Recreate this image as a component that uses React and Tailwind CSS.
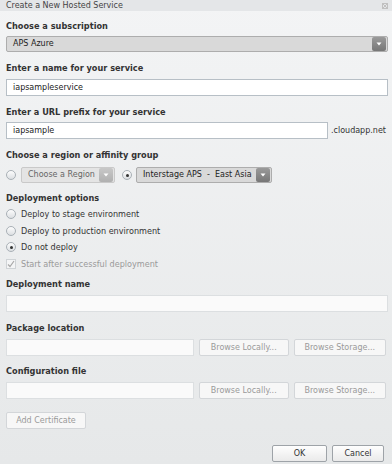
import React from 'react';

const font = { fontFamily: '"DejaVu Sans", Verdana, sans-serif' };

function Label({ children, className = '' }) {
  return <div className={`text-[8.2px] leading-[12px] font-bold text-[#333] ${className}`}>{children}</div>;
}

function Arrow({ dark }) {
  return (
    <div className={`w-[14px] h-[14px] rounded-[2px] flex items-center justify-center ${dark ? 'bg-gradient-to-b from-[#9a9a9a] to-[#777]' : 'bg-gradient-to-b from-[#c8c8c8] to-[#b0b0b0]'}`}>
      <svg width="6" height="4" viewBox="0 0 6 4"><path d="M0.5 0.5 L5.5 0.5 L3 3.5 Z" fill="#fff" /></svg>
    </div>
  );
}

function Select({ children, className = '', disabled, dark }) {
  return (
    <div className={`h-[16px] flex items-center justify-between pl-[6px] pr-px border rounded-[2px] ${disabled ? 'border-[#c9c9c9] bg-[#e4e4e4] text-[#666]' : 'border-[#adadad] bg-[#d9d9d9] text-[#222]'} ${className}`}>
      <span className="text-[8px] leading-[12px] whitespace-pre">{children}</span>
      <Arrow dark={dark} />
    </div>
  );
}

function Radio({ checked }) {
  return (
    <div className="w-[10px] h-[10px] rounded-full border border-[#a9b0b6] bg-gradient-to-b from-[#fdfdfd] to-[#dcdfe2] flex items-center justify-center shrink-0">
      {checked && <div className="w-[3px] h-[3px] rounded-full bg-[#333]" />}
    </div>
  );
}

function Input({ value, disabled, className = '' }) {
  return (
    <div className={`h-[17px] flex items-center px-[6px] border ${disabled ? 'bg-[#fafafa] border-[#dcdfe1]' : 'bg-white border-[#b7bfc6]'} ${className}`}>
      <span className="text-[8px] leading-[12px] text-[#222]">{value}</span>
    </div>
  );
}

function Btn({ children, className = '', disabled }) {
  return (
    <div className={`h-[17px] flex items-center justify-center border rounded-[2px] text-[8px] leading-[12px] ${disabled ? 'bg-[#f7f7f7] border-[#d3d6d9] text-[#9a9a9a]' : 'bg-gradient-to-b from-[#fefefe] to-[#eaeaea] border-[#9ea3a8] text-[#333]'} ${className}`}>
      {children}
    </div>
  );
}

export default function App() {
  return (
    <div style={font} className="w-[392px] h-[464px] overflow-hidden bg-gradient-to-b from-[#f3f4f5] to-[#e6e8e9] flex flex-col">
      <div className="h-[11px] bg-[#e4e6e8] flex items-center justify-between pl-[6px] pr-[4px]">
        <span className="text-[8px] leading-[11px] text-[#444]">Create a New Hosted Service</span>
        <svg width="6" height="6" viewBox="0 0 6 6">
          <rect x="0.5" y="0.5" width="5" height="5" fill="none" stroke="#c0c0c0" />
          <path d="M1 1 L5 5 M5 1 L1 5" stroke="#c0c0c0" />
        </svg>
      </div>

      <div className="flex flex-col px-[6px]">
        <Label className="mt-[9px]">Choose a subscription</Label>
        <Select className="mt-[4px] w-[382px]" dark>APS Azure</Select>

        <Label className="mt-[10px]">Enter a name for your service</Label>
        <Input className="mt-[5px] w-[382px]" value="iapsampleservice" />

        <Label className="mt-[10px]">Enter a URL prefix for your service</Label>
        <div className="mt-[4px] flex items-center gap-[3px]">
          <Input className="w-[322px]" value="iapsample" />
          <span className="text-[8px] leading-[12px] text-[#333]">.cloudapp.net</span>
        </div>

        <Label className="mt-[10px]">Choose a region or affinity group</Label>
        <div className="mt-[6px] flex items-center">
          <Radio />
          <Select className="ml-[5px] w-[94px]" disabled>Choose a Region</Select>
          <div className="ml-[7px]"><Radio checked /></div>
          <Select className="ml-[4px] w-[136px]" dark>{'Interstage APS  -  East Asia'}</Select>
        </div>

        <Label className="mt-[9px]">Deployment options</Label>
        <div className="mt-[2px] flex flex-col">
          {[
            ['Deploy to stage environment', false],
            ['Deploy to production environment', false],
            ['Do not deploy', true],
          ].map(([t, c]) => (
            <div key={t} className="h-[16.5px] flex items-center gap-[5px]">
              <Radio checked={c} />
              <span className="text-[8.1px] leading-[12px] text-[#333]">{t}</span>
            </div>
          ))}
          <div className="h-[16.5px] flex items-center gap-[5px]">
            <div className="w-[10px] h-[10px] border border-[#cfd3d6] bg-[#f4f5f6] flex items-center justify-center">
              <svg width="8" height="8" viewBox="0 0 8 8"><path d="M1 4.5 L3 6.5 L7 1" fill="none" stroke="#a8a8a8" strokeWidth="1.2" /></svg>
            </div>
            <span className="text-[8.1px] leading-[12px] text-[#9a9a9a]">Start after successful deployment</span>
          </div>
        </div>

        <Label className="mt-[6px]">Deployment name</Label>
        <Input className="mt-[5px] w-[382px]" disabled />

        <Label className="mt-[10px]">Package location</Label>
        <div className="mt-[5px] flex items-center">
          <Input className="w-[189px]" disabled />
          <Btn className="ml-[5px] w-[90px]" disabled>Browse Locally...</Btn>
          <Btn className="ml-[5px] w-[93px]" disabled>Browse Storage...</Btn>
        </div>

        <Label className="mt-[9px]">Configuration file</Label>
        <div className="mt-[5px] flex items-center">
          <Input className="w-[189px]" disabled />
          <Btn className="ml-[5px] w-[90px]" disabled>Browse Locally...</Btn>
          <Btn className="ml-[5px] w-[93px]" disabled>Browse Storage...</Btn>
        </div>

        <Btn className="mt-[13px] w-[80px]" disabled>Add Certificate</Btn>

        <div className="mt-[16px] flex justify-end gap-[5px] pr-[2px]">
          <Btn className="w-[55px]">OK</Btn>
          <Btn className="w-[52px]">Cancel</Btn>
        </div>
      </div>
    </div>
  );
}
